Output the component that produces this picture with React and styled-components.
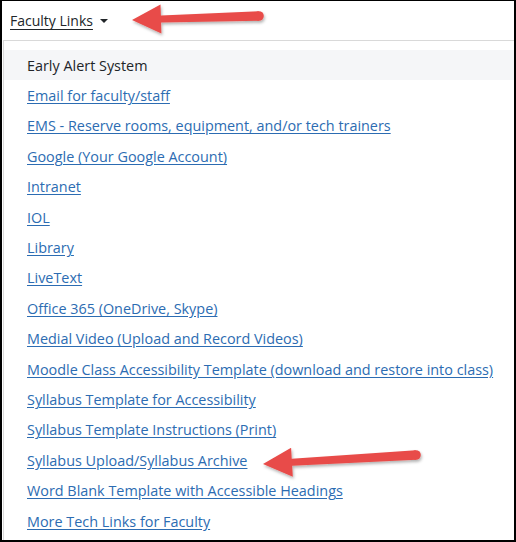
import React from 'react';
import styled, { createGlobalStyle } from 'styled-components';

const GlobalStyle = createGlobalStyle`
  html, body {
    margin: 0;
    padding: 0;
    background: #fff;
  }
  body {
    font-family: "Open Sans", "Noto Sans", sans-serif;
  }
`;

const Frame = styled.div`
  position: relative;
  box-sizing: border-box;
  width: 516px;
  height: 542px;
  border: 1px solid #000;
  border-width: 1px 2px 2px 2px;
  background: #fff;
  overflow: hidden;
`;

const TopBar = styled.div`
  height: 39px;
  display: flex;
  align-items: center;
  padding-left: 8px;
`;

const Toggle = styled.a`
  display: flex;
  align-items: center;
  gap: 7px;
  color: #212529;
  font-size: 14px;
  text-decoration: underline;
  text-underline-offset: 3px;
  cursor: pointer;
`;

const Caret = styled.span`
  width: 0;
  height: 0;
  border-left: 4px solid transparent;
  border-right: 4px solid transparent;
  border-top: 4px solid #212529;
`;

const Menu = styled.ul`
  list-style: none;
  margin: 0 0 0 1px;
  padding: 9px 0 0 0;
  border-top: 1px solid #d9d9d9;
  border-left: 1px solid #d9d9d9;
  height: 100%;
`;

const Item = styled.li`
  height: 30.4px;
  display: flex;
  align-items: center;
  padding-left: 23px;
  font-size: 14.4px;
  background: ${p => (p.$active ? '#f5f6f8' : 'transparent')};
`;

const Link = styled.a`
  color: ${p => (p.$active ? '#212529' : '#2c6cb2')};
  text-decoration: ${p => (p.$active ? 'none' : 'underline')};
  text-underline-offset: 2px;
  white-space: nowrap;
`;

const Overlay = styled.svg`
  position: absolute;
  left: 0;
  top: 0;
  pointer-events: none;
`;

const links = [
  'Early Alert System',
  'Email for faculty/staff',
  'EMS - Reserve rooms, equipment, and/or tech trainers',
  'Google (Your Google Account)',
  'Intranet',
  'IOL',
  'Library',
  'LiveText',
  'Office 365 (OneDrive, Skype)',
  'Medial Video (Upload and Record Videos)',
  'Moodle Class Accessibility Template (download and restore into class)',
  'Syllabus Template for Accessibility',
  'Syllabus Template Instructions (Print)',
  'Syllabus Upload/Syllabus Archive',
  'Word Blank Template with Accessible Headings',
  'More Tech Links for Faculty',
];

function Arrow({ tip, tail, head }) {
  const [tx, ty] = tip;
  const [ex, ey] = tail;
  const dx = ex - tx;
  const dy = ey - ty;
  const len = Math.hypot(dx, dy);
  const ux = dx / len;
  const uy = dy / len;
  const px = -uy;
  const py = ux;
  const bx = tx + ux * head;
  const by = ty + uy * head;
  const hw = 14.5;
  const sw0 = 3.5;
  const sw1 = 4.8;
  const pts = [
    [tx, ty],
    [bx + px * hw, by + py * hw],
    [bx + px * sw0, by + py * sw0],
    [ex + px * sw1, ey + py * sw1],
    [ex - px * sw1, ey - py * sw1],
    [bx - px * sw0, by - py * sw0],
    [bx - px * hw, by - py * hw],
  ];
  const d = pts.map(p => p.map(n => n.toFixed(1)).join(',')).join(' ');
  return (
    <g filter="url(#shadow)">
      <polygon points={d} fill="#e84c48" strokeLinejoin="round" />
      <circle cx={ex} cy={ey} r={sw1} fill="#e84c48" />
    </g>
  );
}

export default function App() {
  return (
    <>
      <GlobalStyle />
      <Frame>
        <TopBar>
          <Toggle>
            Faculty Links <Caret />
          </Toggle>
        </TopBar>
        <Menu>
          {links.map((l, i) => (
            <Item key={l} $active={i === 0}>
              <Link $active={i === 0}>{l}</Link>
            </Item>
          ))}
        </Menu>
        <Overlay width="516" height="542">
          <defs>
            <filter id="shadow" x="-20%" y="-50%" width="140%" height="200%">
              <feDropShadow dx="1" dy="2" stdDeviation="1.5" floodColor="#000" floodOpacity="0.3" />
            </filter>
          </defs>
          <Arrow tip={[130, 19]} tail={[257, 15]} head={29} />
          <Arrow tip={[261, 463]} tail={[414, 454]} head={29} />
        </Overlay>
      </Frame>
    </>
  );
}
